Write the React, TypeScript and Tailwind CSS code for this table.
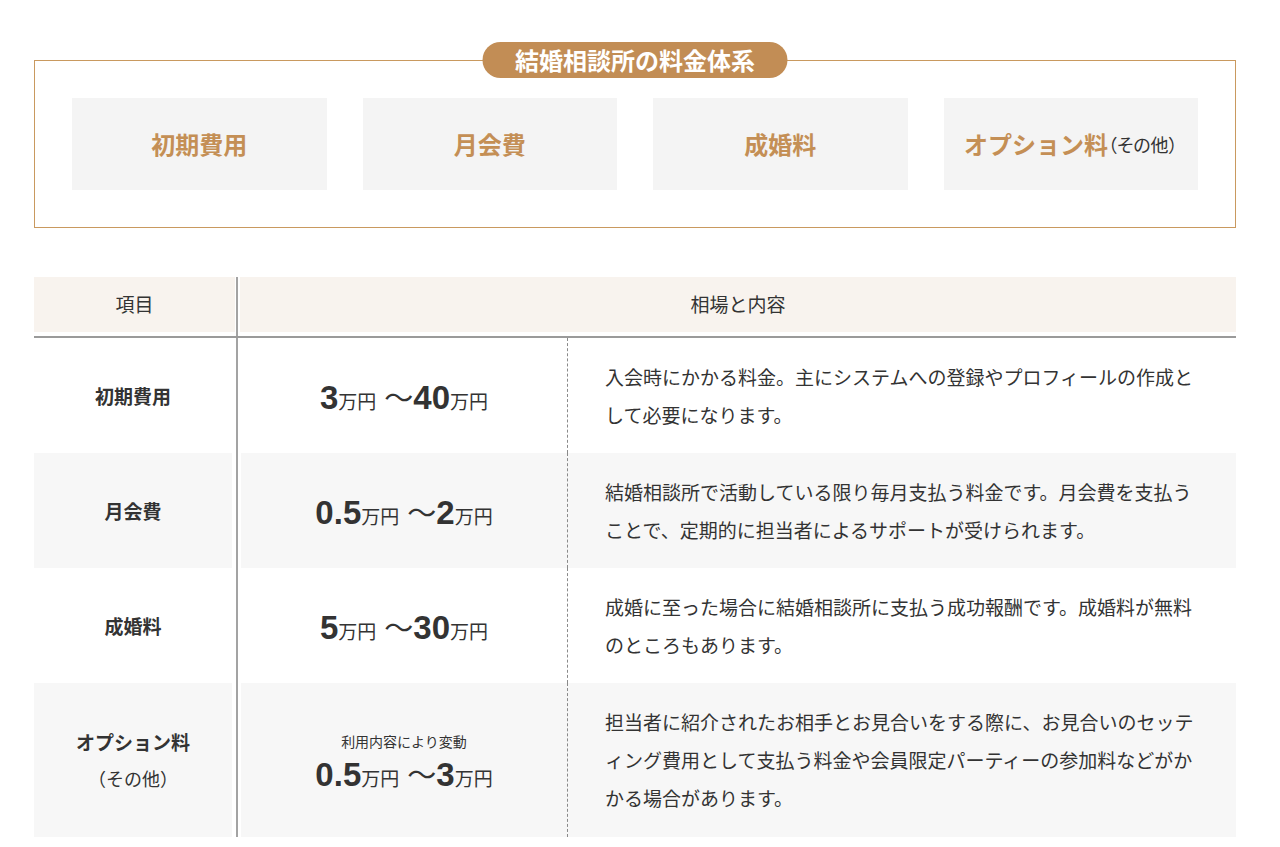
const jp = "font-['Noto_Sans_CJK_JP',sans-serif]";

const cards = [
  { label: "初期費用" },
  { label: "月会費" },
  { label: "成婚料" },
  { label: "オプション料", note: "（その他）" },
];

const rows = [
  {
    label: ["初期費用"],
    from: "3",
    to: "40",
    desc: ["入会時にかかる料金。主にシステムへの登録やプロフィールの作成と", "して必要になります。"],
    h: "h-[115px]",
    alt: false,
  },
  {
    label: ["月会費"],
    from: "0.5",
    to: "2",
    desc: ["結婚相談所で活動している限り毎月支払う料金です。月会費を支払う", "ことで、定期的に担当者によるサポートが受けられます。"],
    h: "h-[115px]",
    alt: true,
  },
  {
    label: ["成婚料"],
    from: "5",
    to: "30",
    desc: ["成婚に至った場合に結婚相談所に支払う成功報酬です。成婚料が無料", "のところもあります。"],
    h: "h-[115px]",
    alt: false,
  },
  {
    label: ["オプション料", "（その他）"],
    from: "0.5",
    to: "3",
    note: "利用内容により変動",
    desc: [
      "担当者に紹介されたお相手とお見合いをする際に、お見合いのセッテ",
      "ィング費用として支払う料金や会員限定パーティーの参加料などがか",
      "かる場合があります。",
    ],
    h: "h-[154px]",
    alt: true,
  },
];

function Price({ from, to }: { from: string; to: string }) {
  return (
    <div className="flex items-baseline text-[#333]">
      <span className="font-['Liberation_Sans',sans-serif] text-[33px] font-bold leading-none">{from}</span>
      <span className={`${jp} text-[19px] leading-none`}>万円</span>
      <span className={`${jp} ml-[8px] text-[29px] leading-none`}>〜</span>
      <span className="font-['Liberation_Sans',sans-serif] text-[33px] font-bold leading-none">{to}</span>
      <span className={`${jp} text-[19px] leading-none`}>万円</span>
    </div>
  );
}

export default function App() {
  return (
    <main className={`min-h-screen bg-white pt-[60px] pb-[10px] ${jp}`}>
      <div className="ml-[34px] w-[1202px]">
        {/* 料金体系 */}
        <section className="relative border border-[#c9995f] px-[37px] py-[37px]">
          <div className="absolute left-1/2 top-[-19px] flex h-[36px] w-[305px] -translate-x-1/2 items-center justify-center rounded-full bg-[#c28d55]">
            <span className="text-[24px] font-bold leading-none text-white">結婚相談所の料金体系</span>
          </div>
          <div className="grid grid-cols-4 gap-[36px]">
            {cards.map((c) => (
              <div key={c.label} className="flex h-[92px] items-center justify-center bg-[#f4f4f4]">
                <span className="text-[24px] font-bold text-[#c48f55]">{c.label}</span>
                {c.note && (
                  <span className="text-[18px] text-[#333] [font-feature-settings:'palt']">{c.note}</span>
                )}
              </div>
            ))}
          </div>
        </section>

        {/* table */}
        <div className="mt-[49px] text-[#333]">
          <div className="flex h-[55px]">
            <div className="flex w-[201px] items-center justify-center bg-[#f8f3ee] text-[19px]">項目</div>
            <div className="flex w-[5px] pl-[1px]">
              <div className="w-[2px] bg-[#a3a3a3]" />
            </div>
            <div className="flex flex-1 items-center justify-center bg-[#f8f3ee] text-[19px]">相場と内容</div>
          </div>
          <div className="flex h-[4px]">
            <div className="w-[202px]" />
            <div className="w-[2px] bg-[#a3a3a3]" />
          </div>
          <div className="h-[2px] bg-[#9a9a9a]" />

          {rows.map((r, i) => {
            const bg = r.alt ? "bg-[#f7f7f7]" : "bg-white";
            return (
              <div key={i} className={`flex ${r.h}`}>
                <div className={`flex w-[198px] flex-col items-center justify-center ${bg} text-[19px] leading-[36px]`}>
                  <span className="font-bold">{r.label[0]}</span>
                  {r.label[1] && <span className="text-[18px]">{r.label[1]}</span>}
                </div>
                <div className="flex w-[9px] bg-white pl-[4px]">
                  <div className="w-[2px] bg-[#a3a3a3]" />
                </div>
                <div className={`flex flex-1 ${bg}`}>
                  <div className="flex w-[327px] flex-col items-center justify-center border-r border-dashed border-[#8a8a8a] pt-[4px]">
                    {r.note && <span className="mb-[10px] text-[14px] leading-none">{r.note}</span>}
                    <Price from={r.from} to={r.to} />
                  </div>
                  <div className="flex flex-1 flex-col justify-center pl-[37px] text-[19px] leading-[38px] whitespace-nowrap">
                    {r.desc.map((d) => (
                      <span key={d}>{d}</span>
                    ))}
                  </div>
                </div>
              </div>
            );
          })}
        </div>
      </div>
    </main>
  );
}
